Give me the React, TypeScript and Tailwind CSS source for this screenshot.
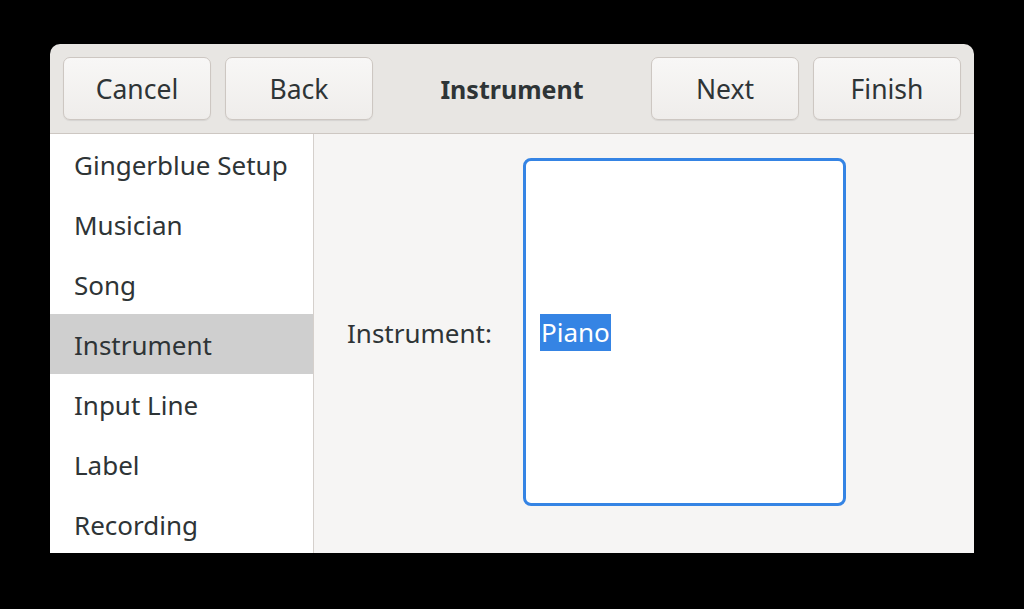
import React from "react";

const font = { fontFamily: '"Noto Sans", "Open Sans", sans-serif' };

function Btn({ children }: { children: React.ReactNode }) {
  return (
    <div className="flex h-[63px] w-[148px] items-center justify-center rounded-[7px] border border-[#cdc7c2] bg-gradient-to-b from-[#f8f7f6] to-[#efedeb] pt-[2px] text-[26.5px] text-[#2e3436] shadow-[0_1px_1px_rgba(0,0,0,0.08)]">
      {children}
    </div>
  );
}

const items = ["Gingerblue Setup", "Musician", "Song", "Instrument", "Input Line", "Label", "Recording"];

export default function App() {
  return (
    <div className="h-[609px] w-[1024px] bg-black pt-[44px] pl-[50px]" style={font}>
      <div className="flex h-[509px] w-[924px] flex-col overflow-hidden rounded-t-[10px]">
        <div className="flex h-[90px] shrink-0 items-center border-b border-[#cdc7c2] bg-[#e8e6e3] pl-[13px] pr-[13px]">
          <div className="flex gap-[14px]">
            <Btn>Cancel</Btn>
            <Btn>Back</Btn>
          </div>
          <div className="flex flex-1 justify-center pt-[2px] text-[25px] font-bold text-[#2e3436]">Instrument</div>
          <div className="flex gap-[14px]">
            <Btn>Next</Btn>
            <Btn>Finish</Btn>
          </div>
        </div>
        <div className="flex flex-1 overflow-hidden">
          <div className="w-[264px] shrink-0 border-r border-[#d5d0cc] bg-white">
            {items.map((it) => (
              <div
                key={it}
                className={`flex h-[60px] items-center pl-[24px] pt-[3px] text-[26px] text-[#2e3436] ${it === "Instrument" ? "bg-[#cfcfcf]" : ""}`}
              >
                {it}
              </div>
            ))}
          </div>
          <div className="flex flex-1 items-start bg-[#f6f5f4] pl-[33px] pt-[24px]">
            <div className="flex h-[348px] w-[176px] shrink-0 items-center pt-[2px] text-[26px] text-[#2e3436]">Instrument:</div>
            <div className="flex h-[348px] w-[323px] items-center rounded-[8px] border-[3px] border-[#3584e4] bg-white pl-[14px]">
              <span className="bg-[#3584e4] px-[1px] text-[26px] leading-[37px] text-white">Piano</span>
            </div>
          </div>
        </div>
      </div>
    </div>
  );
}
